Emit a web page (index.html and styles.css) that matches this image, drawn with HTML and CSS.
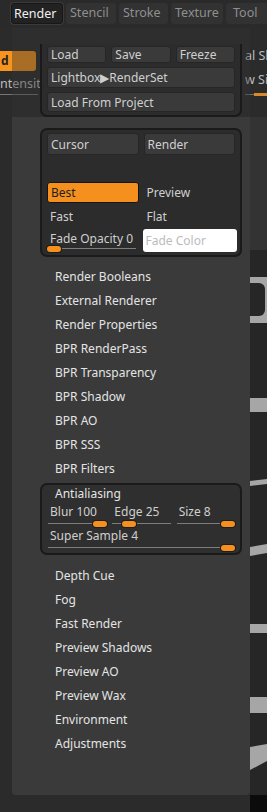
FILE: index.html
```html
<!DOCTYPE html>
<html lang="en">
  <head>
    <meta charset="UTF-8" />
    <meta name="viewport" content="width=device-width, initial-scale=1.0" />
    <title>Render Menu</title>
    <link rel="stylesheet" href="styles.css">
  </head>
  <body>
    <div class="tabs">
      <div class="tab active">Render</div>
      <div class="tab">Stencil</div>
      <div class="tab">Stroke</div>
      <div class="tab">Texture</div>
      <div class="tab">Tool</div>
    </div>

    <div class="stage">
      <!-- palettes behind the popup -->
      <div class="left-palette">
        <div class="orange-btn">d</div>
        <div class="pal-label">ntensity</div>
        <div class="pal-line"></div>
      </div>
      <div class="right-col">
        <div class="right-palette">
          <div class="pal-label">al Sh</div>
          <div class="pal-label">w Siz</div>
          <div class="pal-track"><span></span></div>
        </div>
        <div class="canvas-gap"></div>
        <div class="canvas">
          <svg width="17" height="545" viewBox="0 0 17 545">
            <rect x="0" y="27" width="17" height="46" fill="#a6a6a6" />
            <rect x="-6" y="33" width="21" height="33" rx="6" fill="#262626" />
            <rect x="0" y="148" width="17" height="14" fill="#a6a6a6" />
            <polygon points="0,231 17,229 17,234 0,236" fill="#a6a6a6" />
            <polygon points="0,297 17,294 17,303 0,306" fill="#a6a6a6" />
            <rect x="0" y="374" width="17" height="9" fill="#a6a6a6" />
            <rect x="0" y="447" width="17" height="16" fill="#a6a6a6" />
            <polygon points="0,497 17,494 17,511 0,520" fill="#a6a6a6" />
          </svg>
        </div>
        <div class="canvas-foot"></div>
      </div>

      <!-- render popup -->
      <div class="popup">
        <div class="group top-group">
          <div class="row three">
            <div class="btn">Load</div>
            <div class="btn">Save</div>
            <div class="btn">Freeze</div>
          </div>
          <div class="row">
            <div class="btn tall">Lightbox&#9654;RenderSet</div>
          </div>
          <div class="row">
            <div class="btn">Load From Project</div>
          </div>
        </div>

        <div class="group mode-group">
          <div class="grid2 r1">
            <div class="btn">Cursor</div>
            <div class="btn">Render</div>
          </div>
          <div class="grid2 r2">
            <div class="btn orange">Best</div>
            <div class="plain">Preview</div>
          </div>
          <div class="grid2 r3">
            <div class="plain">Fast</div>
            <div class="plain">Flat</div>
          </div>
          <div class="grid2 r4">
            <div class="slider">
              <div class="slider-label">Fade Opacity 0</div>
              <div class="track"><span class="knob" style="left: 0px"></span></div>
            </div>
            <div class="color-box">Fade Color</div>
          </div>
        </div>

        <ul class="items first">
          <li>Render Booleans</li>
          <li>External Renderer</li>
          <li>Render Properties</li>
          <li>BPR RenderPass</li>
          <li>BPR Transparency</li>
          <li>BPR Shadow</li>
          <li>BPR AO</li>
          <li>BPR SSS</li>
          <li>BPR Filters</li>
        </ul>

        <div class="group aa-group">
          <div class="aa-title">Antialiasing</div>
          <div class="grid3">
            <div class="slider">
              <div class="slider-label">Blur 100</div>
              <div class="track"><span class="knob" style="left: 46px"></span></div>
            </div>
            <div class="slider">
              <div class="slider-label">Edge 25</div>
              <div class="track"><span class="knob" style="left: 11px"></span></div>
            </div>
            <div class="slider">
              <div class="slider-label">Size 8</div>
              <div class="track"><span class="knob" style="left: 45px"></span></div>
            </div>
          </div>
          <div class="slider wide">
            <div class="slider-label">Super Sample 4</div>
            <div class="track"><span class="knob" style="left: 174px"></span></div>
          </div>
        </div>

        <ul class="items second">
          <li>Depth Cue</li>
          <li>Fog</li>
          <li>Fast Render</li>
          <li>Preview Shadows</li>
          <li>Preview AO</li>
          <li>Preview Wax</li>
          <li>Environment</li>
          <li>Adjustments</li>
        </ul>
      </div>
    </div>
  </body>
</html>
```

FILE: styles.css
```css
* {
  box-sizing: border-box;
}
body {
  margin: 0;
  width: 267px;
  height: 812px;
  overflow: hidden;
  background-color: #2b2b2b;
  font-family: "Noto Sans", "Open Sans", sans-serif;
  font-size: 12px;
  color: #e2e2e2;
}

/* tab bar */
.tabs {
  display: flex;
  gap: 3px;
  height: 27px;
  padding: 3px 0 3px 11px;
  background-color: #2a2a2a;
  white-space: nowrap;
  overflow: hidden;
}
.tab {
  flex: none;
  width: 50px;
  height: 21px;
  line-height: 20px;
  padding-left: 4px;
  font-size: 12.5px;
  color: #8f8f8f;
  background-color: #323232;
  border-radius: 3px;
}
.tab.active {
  width: 52px;
  padding-left: 2px;
  color: #f0f0f0;
  background-color: #222;
  border: 1px solid #171717;
  box-shadow: 0 0 0 1px #3a3a3a;
}
.tab:nth-child(3) {
  width: 49px;
}
.tab:nth-child(4) {
  width: 52px;
}
.tab:nth-child(5) {
  width: 45px;
  padding-left: 7px;
}

/* stage with palettes */
.stage {
  position: relative;
  display: flex;
  height: 785px;
}
.left-palette {
  width: 245px;
  padding-top: 24px;
}
.orange-btn {
  width: 36px;
  height: 20px;
  line-height: 20px;
  padding-left: 1px;
  background-color: #f7941d;
  border-radius: 0 3px 3px 0;
  color: #222;
  font-weight: bold;
}
.pal-label {
  height: 18px;
  margin-top: 4px;
  line-height: 18px;
  font-size: 12.5px;
  color: #bdbdbd;
  white-space: nowrap;
  overflow: hidden;
}
.pal-line {
  width: 38px;
  height: 1px;
  margin-top: 1px;
  background-color: #777;
}
.right-col {
  display: flex;
  flex-direction: column;
  width: 22px;
}
.right-palette {
  height: 90px;
  padding-top: 20px;
  overflow: hidden;
}
.right-palette .pal-label {
  margin-top: 0;
  margin-bottom: 6px;
}
.pal-track {
  position: relative;
  height: 1px;
  margin-top: -1px;
  background-color: #6f6f6f;
}
.pal-track span {
  position: absolute;
  left: 9px;
  top: -1px;
  width: 14px;
  height: 3px;
  background-color: #d88a2a;
}
.canvas-gap {
  height: 133px;
  margin-left: 5px;
  background-color: #333;
}
.canvas {
  height: 545px;
  margin-left: 5px;
  background-color: #262626;
}
.canvas svg {
  display: block;
}
.canvas-foot {
  flex: 1;
  margin-left: 5px;
  background-color: #0b0b0b;
}

/* popup menu */
.popup {
  position: absolute;
  left: 12px;
  top: 1px;
  width: 238px;
  height: 767px;
  padding-top: 16px;
  background: linear-gradient(to bottom, rgba(50, 50, 50, 0.4) 0, rgba(50, 50, 50, 0.4) 89px, #3a3a3a 89px);
  border-radius: 0 0 4px 4px;
}
.group {
  width: 202px;
  margin-left: 28px;
  background-color: #2c2c2c;
  border: 2px solid #1a1a1a;
  border-radius: 7px;
  padding: 0 5px;
}
.btn {
  height: 100%;
  padding-left: 3px;
  background-color: #3a3a3a;
  border: 1px solid #262626;
  border-radius: 3px;
  color: #cfcfcf;
  font-size: 12px;
  white-space: nowrap;
  overflow: hidden;
  display: flex;
  align-items: center;
}
.top-group {
  height: 73px;
  padding-top: 2px;
  border-top: none;
  border-radius: 0 0 7px 7px;
}
.row {
  height: 20px;
  margin-top: 4px;
}
.row:first-child {
  height: 17px;
  margin-top: 0;
}
.row:nth-child(2) {
  height: 21px;
}
.row.three {
  display: grid;
  grid-template-columns: 1fr 1fr 1fr;
  gap: 5px;
}

.mode-group {
  height: 129px;
  margin-top: 11px;
  padding-top: 3px;
}
.grid2 {
  display: grid;
  grid-template-columns: 1fr 1fr;
  gap: 5px;
}
.r1 {
  height: 22px;
}
.r2 {
  height: 21px;
  margin-top: 27px;
}
.r3 {
  height: 22px;
  margin-top: 2px;
}
.r4 {
  height: 23px;
  margin-top: 2px;
}
.btn.orange {
  background-color: #f5901f;
  border-color: #151515;
  color: #1e1e1e;
}
.plain {
  display: flex;
  align-items: center;
  padding-left: 3px;
  color: #cfcfcf;
}
.color-box {
  margin: 0 -2px 0 -1px;
  padding-left: 3px;
  background-color: #fff;
  border-radius: 3px;
  color: #bcbcbc;
  display: flex;
  align-items: center;
}

/* sliders */
.slider-label {
  height: 18px;
  line-height: 18px;
  padding-left: 3px;
  color: #cfcfcf;
  white-space: nowrap;
}
.track {
  position: relative;
  height: 6px;
}
.track::before {
  content: "";
  position: absolute;
  left: 1px;
  right: 0;
  top: 2px;
  height: 1px;
  background-color: #7d7d7d;
}
.knob {
  position: absolute;
  top: 0;
  width: 14px;
  height: 6px;
  background-color: #f5901f;
  border-radius: 3px;
  box-shadow: 0 0 0 1px #1d1d1d;
}
.r4 .slider-label {
  height: 17px;
  line-height: 20px;
}
.r4 .track {
  margin-right: 3px;
}

/* menu items */
.items {
  list-style: none;
  margin: 0;
  padding: 0 0 0 43px;
}
.items li {
  height: 24px;
  line-height: 24px;
  color: #e4e4e4;
}
.items.first {
  margin-top: 8px;
}
.items.second {
  margin-top: 9px;
}

.aa-group {
  height: 72px;
  margin-top: 2px;
  background-color: #2f2f2f;
}
.aa-title {
  height: 18px;
  line-height: 18px;
  padding-left: 8px;
  color: #e4e4e4;
}
.grid3 {
  display: grid;
  grid-template-columns: 1fr 1fr 1fr;
  gap: 5px;
}
.slider.wide {
  margin-top: 0;
}
```
